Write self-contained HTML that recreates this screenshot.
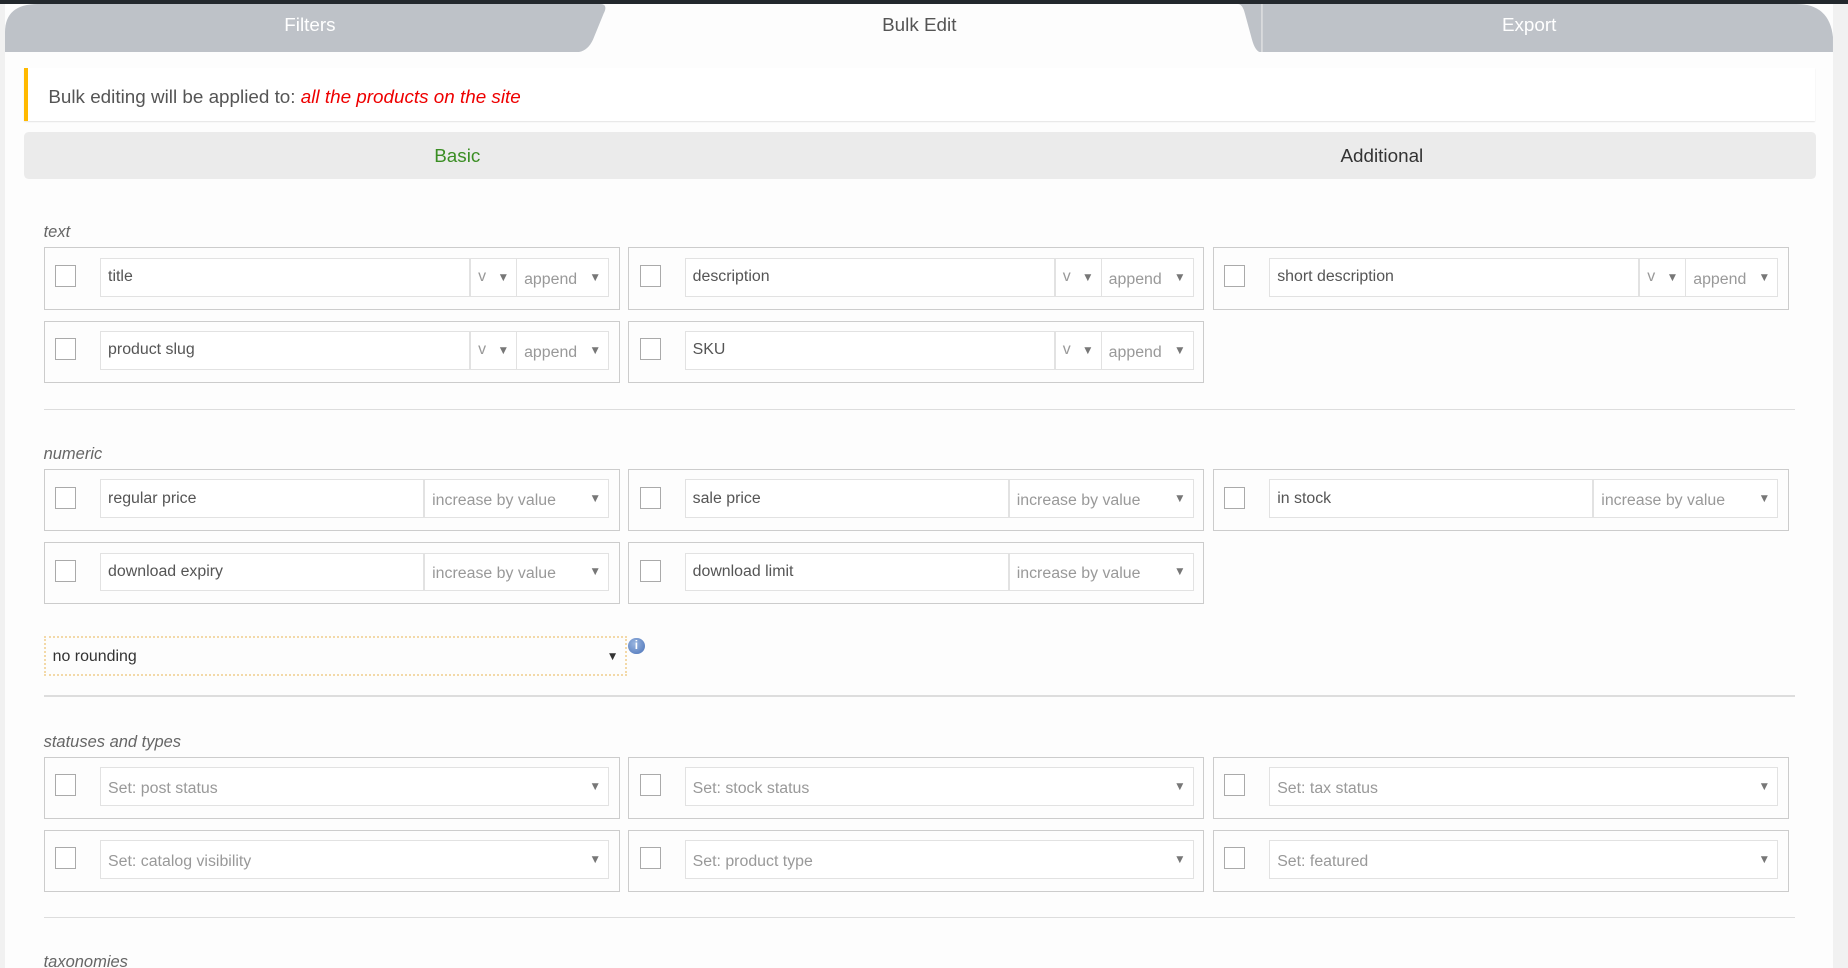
<!DOCTYPE html>
<html><head><meta charset="utf-8"><style>
html,body{margin:0;padding:0;width:1848px;height:967px;overflow:hidden;background:#f1f1f1}
#w{position:absolute;left:0;top:0;width:1568px;height:821px;zoom:1.178571;font-family:"Liberation Sans",sans-serif;overflow:hidden;background:#f1f1f1}
.a{position:absolute}
.lbl{position:absolute;left:37px;font-style:italic;font-size:14px;color:#666}
.box{position:absolute;width:487px;height:51px;border:1px solid #ccc;background:#fdfdfd}
.cb{position:absolute;left:9px;top:14px;width:16px;height:17px;border:1px solid #aaa;background:#fff}
.f{position:absolute;top:8px;height:33px;border:1px solid #e2e2e2;background:#fff;box-sizing:border-box;font-size:13.5px;color:#555;padding:8px 6px;white-space:nowrap;overflow:hidden}
.s{color:#999}
.ar{position:absolute;right:6px;top:10px;font-size:10px;color:#777}
.hr{position:absolute;left:37px;width:1486px;height:1px;background:#ddd}
</style></head><body><div id="w">
<div class="a" style="left:0;top:0;width:1568px;height:3px;background:#23282d"></div>
<div class="a" style="left:4px;top:3px;width:1551px;height:818px;background:#fdfdfd"></div>
<div class="a" style="left:1555px;top:3px;width:13px;height:818px;background:#f1f1f1"></div>
<svg class="a" style="left:4px;top:3px" width="1551" height="41">
<path d="M0 41 V24 Q0 0 28 0 H505 Q512 0 508 8 L499 30 Q494 41 484 41 Z" fill="#bec2c8"/>
<path d="M1046 0 Q1050 0 1052 8 L1058 30 Q1061 41 1066 41 H1551 V28 Q1548 0 1520 0 Z" fill="#bec2c8"/>
<line x1="1066.5" y1="0" x2="1066.5" y2="41" stroke="#e8e8e8"/>
</svg>
<div class="a" style="left:4px;top:12px;width:518px;text-align:center;color:#fff;font-size:16px">Filters</div>
<div class="a" style="left:510px;top:12px;width:540px;text-align:center;color:#555;font-size:16px">Bulk Edit</div>
<div class="a" style="left:1070px;top:12px;width:455px;text-align:center;color:#fff;font-size:16px">Export</div>
<div class="a" style="left:20px;top:58px;width:1517px;height:45px;background:#fff;border-left:4px solid #ffb900;box-shadow:0 1px 1px rgba(0,0,0,.1)"></div>
<div class="a" style="left:41px;top:73px;font-size:16px;color:#555">Bulk editing will be applied to: <i style="color:#e00">all the products on the site</i></div>
<div class="a" style="left:20px;top:112px;width:1521px;height:40px;background:#ebebeb;border-radius:4px"></div>
<div class="a" style="left:20px;top:123px;width:736px;text-align:center;color:#3b8e24;font-size:16px">Basic</div>
<div class="a" style="left:800px;top:123px;width:745px;text-align:center;color:#333;font-size:16px">Additional</div>

<div class="lbl" style="top:189px">text</div>
<div class="box" style="left:37px;top:210px"><div class="cb"></div><div class="f" style="left:47px;width:314px">title</div><div class="f s" style="left:361px;width:40px">v<span class="ar">▼</span></div><div class="f s" style="left:400px;width:79px;padding-top:10px">append<span class="ar">▼</span></div></div>
<div class="box" style="left:533px;top:210px"><div class="cb"></div><div class="f" style="left:47px;width:314px">description</div><div class="f s" style="left:361px;width:40px">v<span class="ar">▼</span></div><div class="f s" style="left:400px;width:79px;padding-top:10px">append<span class="ar">▼</span></div></div>
<div class="box" style="left:1029px;top:210px"><div class="cb"></div><div class="f" style="left:47px;width:314px">short description</div><div class="f s" style="left:361px;width:40px">v<span class="ar">▼</span></div><div class="f s" style="left:400px;width:79px;padding-top:10px">append<span class="ar">▼</span></div></div>
<div class="box" style="left:37px;top:272px"><div class="cb"></div><div class="f" style="left:47px;width:314px">product slug</div><div class="f s" style="left:361px;width:40px">v<span class="ar">▼</span></div><div class="f s" style="left:400px;width:79px;padding-top:10px">append<span class="ar">▼</span></div></div>
<div class="box" style="left:533px;top:272px"><div class="cb"></div><div class="f" style="left:47px;width:314px">SKU</div><div class="f s" style="left:361px;width:40px">v<span class="ar">▼</span></div><div class="f s" style="left:400px;width:79px;padding-top:10px">append<span class="ar">▼</span></div></div>
<div class="hr" style="top:347px"></div>

<div class="lbl" style="top:378px">numeric</div>
<div class="box" style="left:37px;top:398px"><div class="cb"></div><div class="f" style="left:47px;width:275px">regular price</div><div class="f s" style="left:322px;width:157px;padding-top:10px">increase by value<span class="ar">▼</span></div></div>
<div class="box" style="left:533px;top:398px"><div class="cb"></div><div class="f" style="left:47px;width:275px">sale price</div><div class="f s" style="left:322px;width:157px;padding-top:10px">increase by value<span class="ar">▼</span></div></div>
<div class="box" style="left:1029px;top:398px"><div class="cb"></div><div class="f" style="left:47px;width:275px">in stock</div><div class="f s" style="left:322px;width:157px;padding-top:10px">increase by value<span class="ar">▼</span></div></div>
<div class="box" style="left:37px;top:460px"><div class="cb"></div><div class="f" style="left:47px;width:275px">download expiry</div><div class="f s" style="left:322px;width:157px;padding-top:10px">increase by value<span class="ar">▼</span></div></div>
<div class="box" style="left:533px;top:460px"><div class="cb"></div><div class="f" style="left:47px;width:275px">download limit</div><div class="f s" style="left:322px;width:157px;padding-top:10px">increase by value<span class="ar">▼</span></div></div>

<div class="a" style="left:37px;top:540px;height:29px;border:2px dotted #f3d9a8;font-size:13.5px;color:#333;padding:1px 0 0 6px;line-height:29px;width:486px">no rounding<span style="position:absolute;right:6px;font-size:10px;color:#333">▼</span></div>
<div class="a" style="left:533px;top:541px;width:14px;height:14px;border-radius:50%;background:radial-gradient(circle at 40% 35%,#9ab6e0,#4a72b8);color:#fff;font-size:10px;font-weight:bold;text-align:center;line-height:14px">i</div>
<div class="hr" style="top:590px"></div>

<div class="lbl" style="top:622px">statuses and types</div>
<div class="box" style="left:37px;top:642px"><div class="cb"></div><div class="f s" style="left:47px;width:432px;padding-top:10px">Set: post status<span class="ar">▼</span></div></div>
<div class="box" style="left:533px;top:642px"><div class="cb"></div><div class="f s" style="left:47px;width:432px;padding-top:10px">Set: stock status<span class="ar">▼</span></div></div>
<div class="box" style="left:1029px;top:642px"><div class="cb"></div><div class="f s" style="left:47px;width:432px;padding-top:10px">Set: tax status<span class="ar">▼</span></div></div>
<div class="box" style="left:37px;top:704px"><div class="cb"></div><div class="f s" style="left:47px;width:432px;padding-top:10px">Set: catalog visibility<span class="ar">▼</span></div></div>
<div class="box" style="left:533px;top:704px"><div class="cb"></div><div class="f s" style="left:47px;width:432px;padding-top:10px">Set: product type<span class="ar">▼</span></div></div>
<div class="box" style="left:1029px;top:704px"><div class="cb"></div><div class="f s" style="left:47px;width:432px;padding-top:10px">Set: featured<span class="ar">▼</span></div></div>
<div class="hr" style="top:778px"></div>
<div class="lbl" style="top:809px">taxonomies</div>
</div></body></html>
